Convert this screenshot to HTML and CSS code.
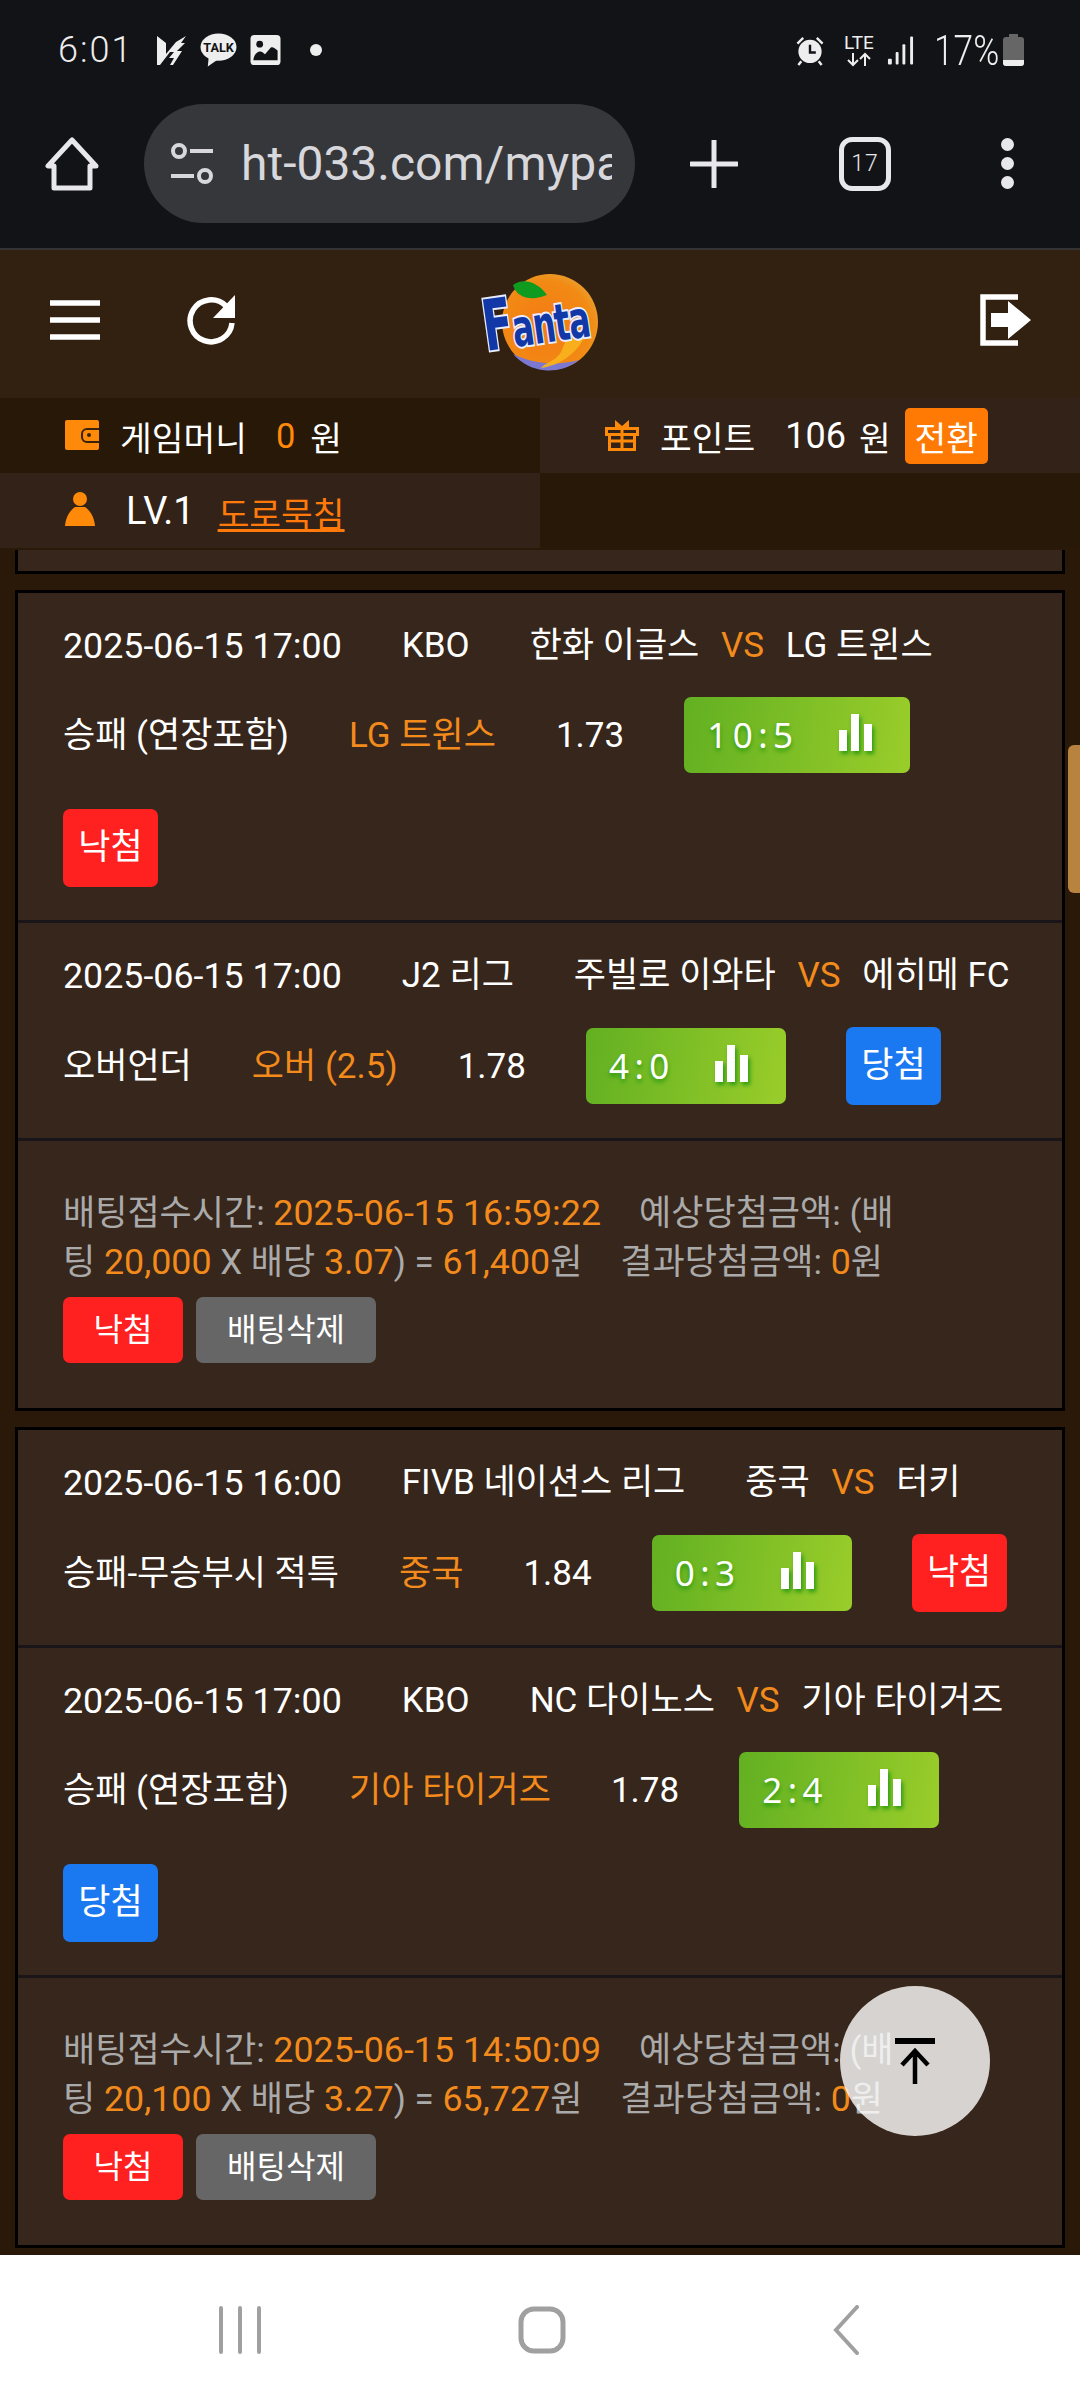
FILE: index.html
```html
<!DOCTYPE html>
<html lang="ko">
<head>
  <meta charset="UTF-8">
  <meta name="viewport" content="width=device-width, initial-scale=1.0">
  <title>ht-033.com/mypage</title>
  <link rel="stylesheet" href="styles.css">
</head>
<body>
  <div class="phone">
    <!-- Status bar -->
    <div class="status-bar">
      <div class="status-left">
        <span class="clock">6:01</span>
        <svg class="st-v" width="30" height="30" viewBox="0 0 30 30"><path fill="#eee" d="M0 1l9 7v11L19 7l10-6-5 7h4l-8 8h5L16 30h-3l4-7h-5l5-6h-4L3 30H0z"/></svg>
        <svg class="st-talk" width="37" height="34" viewBox="0 0 38 34"><ellipse cx="19" cy="14" rx="18.500" ry="14" fill="#eee"/><path d="M9 24l-1 10 10-7z" fill="#eee"/><text x="19" y="19" class="talk-text">TALK</text></svg>
        <svg class="st-img" width="31" height="30" viewBox="0 0 31 31"><rect width="31" height="31" rx="4" fill="#eee"/><circle cx="9.500" cy="9.500" r="3.500" fill="#121317"/><path d="M3 26c0-4 3-9 7-9 2 0 3 1 5 3l6-7c2-1 3 0 7 3v10z" fill="#121317"/></svg>
        <span class="st-dot"></span>
      </div>
      <div class="status-right">
        <svg class="st-alarm" width="30" height="31" viewBox="0 0 30 32"><circle cx="15" cy="17" r="12" fill="#eee"/><path d="M15 10v8h6" fill="none" stroke="#121317" stroke-width="2.500"/><path d="M2 9l6-6M28 9l-6-6M6 27l-3 4M24 27l3 4" stroke="#eee" stroke-width="2.500"/></svg>
        <div class="lte"><span>LTE</span><svg width="30" height="15" viewBox="0 0 30 15"><path d="M9 1v12M4 8l5 5 5-5M21 14V2M16 7l5-5 5 5" fill="none" stroke="#eee" stroke-width="2"/></svg></div>
        <svg class="st-signal" width="27" height="30" viewBox="0 0 28 30"><g fill="#eee"><rect x="1" y="24" width="4" height="6" rx="1"/><rect x="9" y="17" width="3" height="13" rx="1"/><rect x="16" y="9" width="3" height="21" rx="1"/><rect x="24" y="1" width="3" height="29" rx="1"/></g></svg>
        <span class="batt-text">17%</span>
        <svg width="21" height="32" viewBox="0 0 21 32"><path d="M6 0h9v3h3a3 3 0 0 1 3 3v23a3 3 0 0 1-3 3H3a3 3 0 0 1-3-3V6a3 3 0 0 1 3-3h3z" fill="#666"/><path d="M0 26h21v3a3 3 0 0 1-3 3H3a3 3 0 0 1-3-3z" fill="#eee"/></svg>
      </div>
    </div>

    <!-- Browser toolbar -->
    <div class="browser-bar">
      <svg class="br-home" width="54" height="54" viewBox="0 0 54 54"><path d="M27 3L3 29h6v22h36V29h6z" fill="none" stroke="#e8e8ec" stroke-width="5" stroke-linejoin="round"/></svg>
      <div class="url-pill">
        <svg width="44" height="44" viewBox="0 0 44 44"><g fill="none" stroke="#d8d8dc" stroke-width="4"><circle cx="9" cy="9" r="6"/><path d="M20 9h23M1 34h23"/><circle cx="35" cy="34" r="6"/></g></svg>
        <span class="url-text">ht-033.com/mypa</span>
      </div>
      <svg class="br-plus" width="48" height="48" viewBox="0 0 48 48"><path d="M24 1v46M1 24h46" stroke="#e8e8ec" stroke-width="5" stroke-linecap="round"/></svg>
      <div class="tab-count">17</div>
      <div class="kebab"><i></i><i></i><i></i></div>
    </div>

    <!-- Site header -->
    <header class="site-header">
      <svg class="hd-menu" width="50" height="40" viewBox="0 0 50 40"><path d="M0 3h50M0 20h50M0 37h50" stroke="#fff" stroke-width="5.500"/></svg>
      <svg class="hd-reload" width="52" height="52" viewBox="0 0 52 52"><path d="M41 12A21 21 0 1 0 47 29" fill="none" stroke="#fff" stroke-width="5.500"/><path d="M50 1v23H28z" fill="#fff"/></svg>
      <svg class="logo" width="116" height="102" viewBox="0 0 116 102">
        <defs>
          <radialGradient id="fruit" cx="45%" cy="55%" r="60%"><stop offset="0" stop-color="#f47a14"/><stop offset=".8" stop-color="#f28a14"/><stop offset="1" stop-color="#e8a030"/></radialGradient>
        </defs>
        <circle cx="67" cy="51" r="48" fill="url(#fruit)"/>
        <path d="M30 83a48 48 0 0 0 66 6c-22 6-46 4-66-6z" fill="#7a78d0"/>
        <path d="M30 14c8-6 22-6 34 10-14 6-30 4-34-10z" fill="#0f9a20"/>
        <path d="M58 97c18-2 34-14 42-28 2-4-4-7-12-4-8 3-6 14-14 21-4 4-12 6-16 11z" fill="#f9b41c" opacity=".9"/>
        <text class="logo-text" transform="translate(3 80) rotate(-8) scale(1 1.6)"><tspan class="logo-f">F</tspan>anta</text>
      </svg>
      <svg class="hd-logout" width="52" height="52" viewBox="0 0 52 52"><path d="M38 3H3v46h35" fill="none" stroke="#fff" stroke-width="5.500"/><path d="M11 19h17V7l23 19-23 19V33H11z" fill="#fff"/></svg>
    </header>

    <!-- Member info -->
    <div class="info-grid">
      <div class="info-cell dark">
        <svg class="ic-wallet" width="34" height="30" viewBox="0 0 34 30"><path d="M2 0h30a2 2 0 0 1 2 2v26a2 2 0 0 1-2 2H2a2 2 0 0 1-2-2V2a2 2 0 0 1 2-2z" fill="#ff8a0a"/><path d="M34 9H22a5 5 0 0 0-5 5v3a5 5 0 0 0 5 5h12" fill="none" stroke="#3a2208" stroke-width="2"/><circle cx="24" cy="15" r="2" fill="#3a2208"/></svg>
        <span>게임머니</span><b class="orange-num">0</b><span>원</span>
      </div>
      <div class="info-cell light">
        <svg class="ic-gift" width="34" height="32" viewBox="0 0 34 32"><path d="M10 1l7 6 7-6v7H10z" fill="#ff8a0a"/><path d="M1.500 9.500h31v6h-31zM4.500 15.500h25v15h-25zM17 9v22M4 22h26" fill="none" stroke="#ff8a0a" stroke-width="3"/></svg>
        <span>포인트</span><span class="num-gap">106</span><span>원</span>
        <span class="exchange">전환</span>
      </div>
      <div class="info-cell light">
        <svg class="ic-user" width="30" height="34" viewBox="0 0 30 34"><circle cx="15" cy="7" r="7" fill="#ff8a0a"/><path d="M10 15h10c4 3 9 8 10 19H0c1-11 6-16 10-19z" fill="#ff8a0a"/></svg>
        <span class="level">LV.1</span><a class="nick">도로묵침</a>
      </div>
      <div class="info-cell dark"></div>
    </div>

    <!-- Betting list -->
    <main class="bet-list">
      <div class="bet-card stub"></div>

      <section class="bet-card">
        <div class="bet-row">
          <span class="date">2025-06-15 17:00</span>
          <span>KBO</span>
          <span class="match">한화 이글스 <em>VS</em> LG 트윈스</span>
          <span>승패 (연장포함)</span>
          <span class="pick">LG 트윈스</span>
          <span>1.73</span>
          <span class="score wide">10:5 <svg class="bars" width="33" height="37" viewBox="0 0 33 37"><path d="M0 16h8v21H0zM12 0h8v37h-8zM25 10h8v27h-8z" fill="#fff"/></svg></span>
          <span class="result lose">낙첨</span>
        </div>
        <div class="bet-row">
          <span class="date">2025-06-15 17:00</span>
          <span>J2 리그</span>
          <span class="match">주빌로 이와타 <em>VS</em> 에히메 FC</span>
          <span>오버언더</span>
          <span class="pick">오버 (2.5)</span>
          <span>1.78</span>
          <span class="score">4:0 <svg class="bars" width="33" height="37" viewBox="0 0 33 37"><path d="M0 16h8v21H0zM12 0h8v37h-8zM25 10h8v27h-8z" fill="#fff"/></svg></span>
          <span class="result win">당첨</span>
        </div>
        <div class="bet-summary">
          <p>배팅접수시간: <span class="amt">2025-06-15 16:59:22</span><span class="tab"></span>예상당첨금액: (배<br>팅 <span class="amt">20,000</span> X 배당 <span class="amt">3.07</span>) = <span class="amt">61,400</span>원<span class="tab"></span>결과당첨금액: <span class="amt">0</span>원</p>
          <div class="summary-btns"><span class="btn-red">낙첨</span><span class="btn-grey">배팅삭제</span></div>
        </div>
      </section>

      <section class="bet-card">
        <div class="bet-row">
          <span class="date">2025-06-15 16:00</span>
          <span>FIVB 네이션스 리그</span>
          <span class="match">중국 <em>VS</em> 터키</span>
          <span>승패-무승부시 적특</span>
          <span class="pick">중국</span>
          <span>1.84</span>
          <span class="score">0:3 <svg class="bars" width="33" height="37" viewBox="0 0 33 37"><path d="M0 16h8v21H0zM12 0h8v37h-8zM25 10h8v27h-8z" fill="#fff"/></svg></span>
          <span class="result lose">낙첨</span>
        </div>
        <div class="bet-row">
          <span class="date">2025-06-15 17:00</span>
          <span>KBO</span>
          <span class="match">NC 다이노스 <em>VS</em> 기아 타이거즈</span>
          <span>승패 (연장포함)</span>
          <span class="pick">기아 타이거즈</span>
          <span>1.78</span>
          <span class="score">2:4 <svg class="bars" width="33" height="37" viewBox="0 0 33 37"><path d="M0 16h8v21H0zM12 0h8v37h-8zM25 10h8v27h-8z" fill="#fff"/></svg></span>
          <span class="result win">당첨</span>
        </div>
        <div class="bet-summary">
          <p>배팅접수시간: <span class="amt">2025-06-15 14:50:09</span><span class="tab"></span>예상당첨금액: (배<br>팅 <span class="amt">20,100</span> X 배당 <span class="amt">3.27</span>) = <span class="amt">65,727</span>원<span class="tab"></span>결과당첨금액: <span class="amt">0</span>원</p>
          <div class="summary-btns"><span class="btn-red">낙첨</span><span class="btn-grey">배팅삭제</span></div>
        </div>
      </section>
    </main>

    <!-- Android nav -->
    <nav class="nav-bar">
      <svg width="44" height="48" viewBox="0 0 44 48"><path d="M3 2v44M22 2v44M41 2v44" stroke="#a0a0a0" stroke-width="4" stroke-linecap="round"/></svg>
      <svg class="nav-home" width="48" height="48" viewBox="0 0 48 48"><rect x="3" y="3" width="42" height="42" rx="13" fill="none" stroke="#a0a0a0" stroke-width="5"/></svg>
      <svg width="26" height="50" viewBox="0 0 26 50"><path d="M24 2L3 25l21 23" fill="none" stroke="#a0a0a0" stroke-width="4" stroke-linecap="round"/></svg>
    </nav>

    <div class="scroll-thumb"></div>
    <div class="to-top">
      <svg width="42" height="46" viewBox="0 0 42 46"><path d="M1 3h40" stroke="#000" stroke-width="6"/><path d="M21 46V13M8 27l13-14 13 14" fill="none" stroke="#000" stroke-width="4.500"/></svg>
    </div>
  </div>
</body>
</html>
```
FILE: styles.css
```css
* {
  box-sizing: border-box;
}

body {
  margin: 0;
  background-color: #2a1808;
  font-family: Roboto, 'Noto Sans CJK KR', sans-serif;
  color: #fff;
}

.phone {
  position: relative;
  width: 1080px;
  height: 2400px;
  overflow: hidden;
  display: flex;
  flex-direction: column;
  background-color: #2a1808;
}

/* Status bar */
.status-bar {
  height: 100px;
  background-color: #121317;
  display: flex;
  align-items: center;
  justify-content: space-between;
  padding: 0 56px 0 58px;
  color: #eee;
}

.status-left,
.status-right {
  display: flex;
  align-items: center;
}

.clock {
  font-size: 36px;
  letter-spacing: 2px;
  font-weight: 300;
  margin-right: 24px;
}

.st-talk {
  margin-left: 13px;
}

.st-img {
  margin-left: 13px;
}

.talk-text {
  font-family: Roboto, sans-serif;
  font-size: 13px;
  font-weight: 700;
  text-anchor: middle;
  fill: #121317;
}

.st-dot {
  width: 12px;
  height: 12px;
  border-radius: 50%;
  background-color: #eee;
  margin-left: 29px;
}

.st-alarm {
  margin-right: 19px;
}

.st-signal {
  margin-left: 13px;
}

.lte {
  display: flex;
  flex-direction: column;
  align-items: center;
  font-size: 19px;
  line-height: 18px;
}

.batt-text {
  width: 62px;
  margin: 0 7px 0 20px;
  font-size: 42px;
  font-weight: 300;
  white-space: nowrap;
  transform: scaleX(0.84);
  transform-origin: left center;
}

/* Browser toolbar */
.browser-bar {
  height: 150px;
  background-color: #121317;
  border-bottom: 2px solid #333;
  display: flex;
  align-items: center;
  padding-bottom: 21px;
  padding-left: 45px;
}

.url-pill {
  width: 491px;
  height: 119px;
  margin-left: 45px;
  border-radius: 60px;
  background-color: #36373b;
  display: flex;
  align-items: center;
  padding: 0 23px 0 26px;
  gap: 27px;
  overflow: hidden;
}

.url-pill svg {
  flex-shrink: 0;
}

.url-text {
  font-size: 48px;
  color: #d8d8dc;
  white-space: nowrap;
  overflow: hidden;
}

.br-plus {
  margin-left: 55px;
}

.tab-count {
  width: 52px;
  height: 54px;
  margin-left: 101px;
  border: 5px solid #e8e8ec;
  border-radius: 13px;
  font-size: 23px;
  font-weight: 300;
  letter-spacing: 1px;
  color: #e8e8ec;
  display: flex;
  align-items: center;
  justify-content: center;
}

.kebab {
  margin-left: 110px;
  display: flex;
  flex-direction: column;
  gap: 6px;
}

.kebab i {
  width: 13px;
  height: 13px;
  border-radius: 50%;
  background-color: #e8e8ec;
}

/* Site header */
.site-header {
  height: 148px;
  background-color: #322010;
  display: flex;
  align-items: center;
  padding-left: 50px;
  padding-bottom: 9px;
  position: relative;
}

.hd-reload {
  margin-left: 85px;
}

.logo {
  margin-left: 246px;
  margin-top: 5px;
  overflow: visible;
}

.logo-text {
  font-family: 'DejaVu Sans', sans-serif;
  font-size: 32px;
  font-weight: 700;
  letter-spacing: -1px;
  fill: #1238a8;
  stroke: #e8eeff;
  stroke-width: 2.5px;
  paint-order: stroke;
}

.logo-f {
  font-size: 44px;
}

.hd-logout {
  margin-left: auto;
  margin-right: 48px;
}

/* Member info */
.info-grid {
  display: grid;
  grid-template-columns: 540px 540px;
  grid-auto-rows: 75px;
  font-size: 34.5px;
}

.info-cell {
  display: flex;
  align-items: center;
  padding-left: 65px;
  white-space: nowrap;
}

.info-cell.dark {
  background-color: #281808;
}

.info-cell.light {
  background-color: #322217;
}

.ic-wallet,
.ic-gift,
.ic-user {
  flex-shrink: 0;
  margin-right: 21px;
  margin-top: -2px;
}

.ic-user {
  margin-right: 31px;
  margin-top: -4px;
}

.orange-num {
  font-weight: 400;
  color: #ff8a0a;
  margin: 0 15px 0 29px;
}

.num-gap {
  font-size: 36px;
  margin: 0 13px 0 30px;
}

.exchange {
  margin-left: 14px;
  width: 83px;
  height: 56px;
  border-radius: 5px;
  background-color: #ff7a05;
  display: flex;
  align-items: center;
  justify-content: center;
}

.level {
  font-size: 38px;
}

.nick {
  margin-left: 23px;
  margin-top: 3px;
  color: #ff7a0a;
  text-decoration: underline;
}

/* Betting list */
.bet-list {
  flex: 1;
  padding: 2px 15px 0;
  display: flex;
  flex-direction: column;
  gap: 16px;
}

.bet-card {
  border: 3px solid #000;
  background-color: #36261b;
}

.bet-card.stub {
  height: 24px;
  border-top: 0;
}

.bet-row {
  display: flex;
  flex-wrap: wrap;
  align-items: center;
  column-gap: 60px;
  row-gap: 36px;
  padding: 36px 40px 33px 45px;
  border-bottom: 3px solid #1a1518;
  font-size: 35px;
  line-height: 32px;
  white-space: nowrap;
}

.bet-row > span {
  margin: 1px 0 -1px;
}

.bet-row > .date {
  font-size: 35.8px;
}

.match em {
  font-style: normal;
  color: #f28a1c;
  margin: 0 13px;
}

.pick {
  color: #f28a1c;
}

.bet-row > .score {
  margin: 0;
  height: 76px;
  width: 200px;
  border-radius: 7px;
  background: linear-gradient(100deg, #62b022, #9acd2a);
  display: flex;
  align-items: center;
  padding-left: 23px;
  font-family: 'Noto Sans', sans-serif;
  font-size: 35px;
  letter-spacing: 5.5px;
  text-shadow: 0 3px 4px #2a9a10;
}

.score.wide {
  width: 226px;
}

.bars {
  margin-left: auto;
  margin-right: 38px;
  margin-top: -5px;
  filter: drop-shadow(2px 3px 2px #2a9a10);
}

.bet-row > .result {
  margin: 0;
  width: 95px;
  height: 78px;
  border-radius: 7px;
  display: flex;
  align-items: center;
  justify-content: center;
}

.lose {
  background-color: #ff2020;
}

.win {
  background-color: #1a78f0;
}

.bet-summary {
  padding: 48px 150px 45px 45px;
  font-size: 35px;
  line-height: 49px;
  color: #aaa;
}

.bet-summary p {
  margin: 0;
}

.amt {
  color: #f28a1c;
  font-size: 35.8px;
}

.tab {
  display: inline-block;
  width: 38px;
}

.summary-btns {
  display: flex;
  gap: 13px;
  margin-top: 10px;
  color: #fff;
  font-size: 32px;
}

.summary-btns span {
  height: 66px;
  border-radius: 7px;
  display: flex;
  align-items: center;
  justify-content: center;
}

.btn-red {
  width: 120px;
  background-color: #ff2020;
}

.btn-grey {
  width: 180px;
  background-color: #666;
}

/* Android nav */
.nav-bar {
  height: 145px;
  background-color: #fff;
  display: flex;
  align-items: center;
  padding: 5px 0 0 218px;
  flex-shrink: 0;
}

.nav-home {
  margin: 0 267px 0 256px;
}

/* Overlays */
.scroll-thumb {
  position: absolute;
  left: 1068px;
  top: 745px;
  width: 12px;
  height: 148px;
  border-radius: 6px 0 0 6px;
  background-color: #b8823f;
}

.to-top {
  position: absolute;
  left: 840px;
  top: 1986px;
  width: 150px;
  height: 150px;
  border-radius: 50%;
  background-color: rgba(255, 255, 255, 0.8);
  display: flex;
  align-items: center;
  justify-content: center;
}
```
